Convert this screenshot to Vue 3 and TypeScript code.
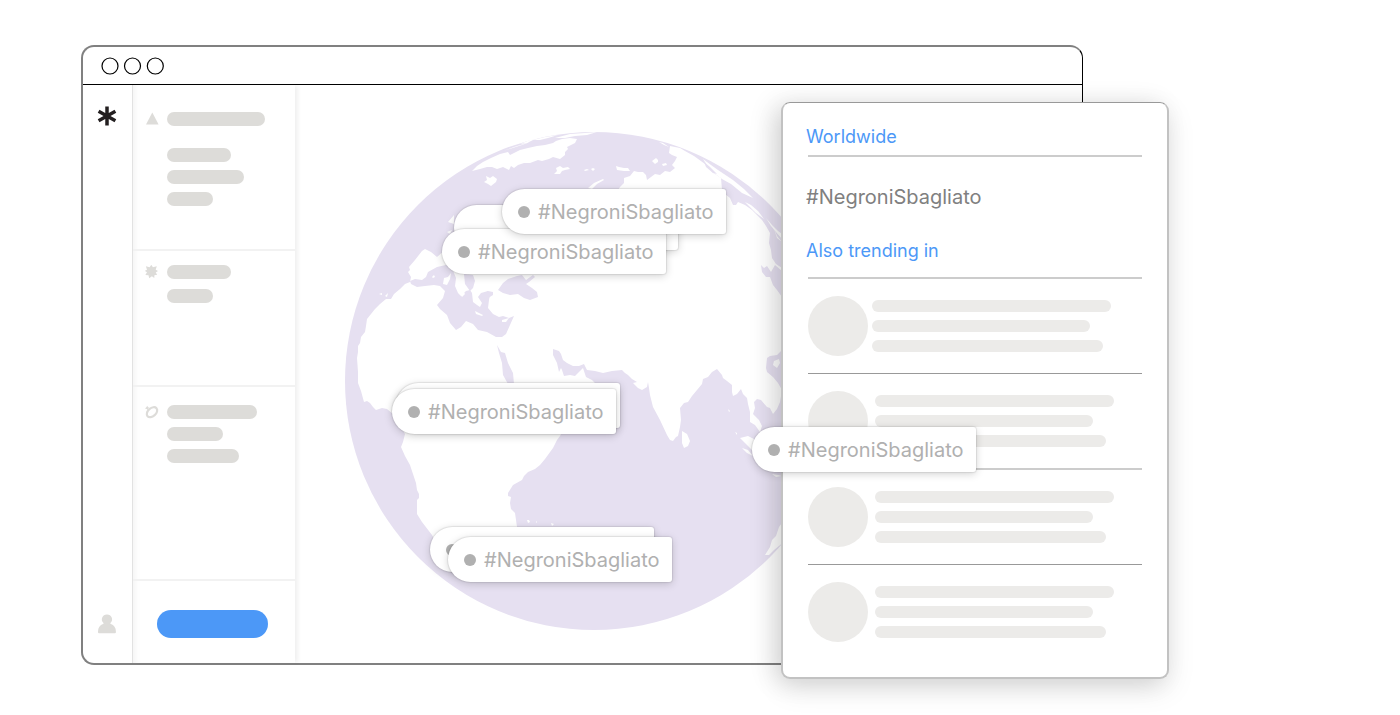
<script setup lang="ts">
interface Pin {
  x: number
  y: number
  dot: boolean
  label: string
}

interface Group {
  icon: 'triangle' | 'burst' | 'ring'
  bars: number[]
}

const tag = '#NegroniSbagliato'

const pins: Pin[] = [
  { x: 159, y: 120, dot: false, label: '' },
  { x: 147, y: 144, dot: true, label: tag },
  { x: 207, y: 104, dot: true, label: tag },
  { x: 101, y: 298, dot: false, label: '' },
  { x: 97, y: 304, dot: true, label: tag },
  { x: 135, y: 442, dot: true, label: '' },
  { x: 153, y: 452, dot: true, label: tag },
  { x: 457, y: 342, dot: true, label: tag },
]

const groups: Group[] = [
  { icon: 'triangle', bars: [98, 64, 77, 46] },
  { icon: 'burst', bars: [64, 46] },
  { icon: 'ring', bars: [90, 56, 72] },
]

const trends = [1, 2, 3, 4]
const lines = [239, 218, 231]
</script>

<template>
  <main class="page">
    <section class="window">
      <header class="titlebar">
        <svg width="64" height="18" viewBox="0 0 64 18" aria-hidden="true">
          <g fill="none" stroke="#000" stroke-width="1.2">
            <circle cx="9" cy="9" r="8" />
            <circle cx="31.5" cy="9" r="8" />
            <circle cx="54.3" cy="9" r="8" />
          </g>
        </svg>
      </header>
      <div class="body">
        <nav class="rail">
          <svg width="20" height="20" viewBox="0 0 20 20" aria-hidden="true">
            <path d="M10 .5V19.500M1.600 5.300L18.400 14.700M18.400 5.300L1.600 14.700" stroke="#231f20" stroke-width="3.500" />
          </svg>
          <svg width="20" height="20" viewBox="0 0 20 20" aria-hidden="true">
            <path
              d="M10 .4a5 5 0 0 1 3.400 8.700c-.3.5 0 .8.5 1 3 1 5 3.700 5 7.400v.8q0 1-1 1H2q-1 0-1-1v-.8c0-3.700 2-6.400 5-7.400.6-.2.8-.5.5-1A5 5 0 0 1 10 .4z"
              fill="#dddcd9"
            />
          </svg>
        </nav>
        <aside class="side">
          <div v-for="g in groups" :key="g.icon" class="group" :class="g.icon">
            <svg class="glyph" width="14" height="14" viewBox="0 0 14 14" aria-hidden="true">
              <path v-if="g.icon === 'triangle'" d="M7.300 .5L13.600 12.500H1z" fill="#dddcd9" />
              <path
                v-else-if="g.icon === 'burst'"
                d="M6.300 -.2L7.900 2.200 11.800 1.200 10.700 4.700 13 6 10.700 7.600 12.200 9.800 9.400 10.200 9.300 13 6.900 11.300 4.200 13.200 3.500 10.300 .4 10 2 7.300 -.2 5.900 2 4.700 .9 1.200 4.600 2.200z"
                fill="#dddcd9"
              />
              <g v-else>
                <ellipse cx="7" cy="7.200" rx="6" ry="4" transform="rotate(-42 7 7.200)" fill="none" stroke="#dddcd9" stroke-width="2.200" />
                <path d="M2.300 .8l.7 1.500 1.700.5-1.600.9-.4 1.500-1-1.300L0 3.500l1.300-1.200z" fill="#dddcd9" />
              </g>
            </svg>
            <div class="stack">
              <span v-for="(w, i) in g.bars" :key="i" class="bar" :style="{ width: w + 'px' }"></span>
            </div>
          </div>
          <div class="foot">
            <button class="cta" type="button" aria-label="Search"></button>
          </div>
        </aside>
        <div class="map">
          <svg class="globe" viewBox="345 132 498 498" aria-hidden="true">
            <circle cx="594" cy="381" r="249" fill="#e6e0f1" />
            <g fill="#fff">
              <!-- Africa, Europe and Asia -->
              <path
                d="M425 249L422 251 415 260 409 267 410 270 408 272 411 277 410 282 405 284 400 289 394 294 391 299 386 299 380 304 375 309 367 319 366 326 365 332 361 337 360 343 358 346 358 352 357 358 358 372 358 383 361 391 364 402 367 401 370 403 373 407 376 410 382 408 387 409 393 414 405 434 403 442 401 447 405 456 410 465 413 474 416 483 417 490 419 494 419 498 417 500 417 514 422 522 432 535 445 560 465 568 500 550 517 527 516 520 515 513 511 509 510 503 511 497 508 496 508 493 513 485 522 480 524 476 528 472 535 469 540 465 545 459 553 448 557 440 560 436 566 424 568 410 540 400 518 396 516 388 560 395 580 392 595 383 592 380 586 377 583 368 575 376 570 375 564 376 562 370 561 368 559 372 557 363 553 355 553 349 559 351 561 354 563 360 567 363 573 366 579 366 584 364 587 370 595 371 603 373 612 371 622 370 625 373 628 375 632 379 637 382 633 383 638 388 642 390 647 387 648 382 649 388 650 395 653 407 660 420 667 435 670 440 673 441 676 437 678 436 680 427 681 420 680 408 684 403 688 402 692 396 697 390 702 384 703 379 708 377 712 372 717 369 722 375 723 378 727 381 732 385 732 392 733 396 737 394 741 389 743 394 747 398 748 404 750 412 750 422 755 425 760 432 762 426 759 420 753 414 755 408 754 402 757 399 761 400 767 407 770 408 773 414 777 409 780 402 782 390 778 383 773 377 767 372 766 368 767 358 770 356 777 355 782 350 800 340 800 300 782 297 777 290 773 285 770 277 766 277 762 272 761 265 764 268 767 266 771 272 775 265 782 271 782 268 776 264 772 258 771 250 769 243 770 233 766 226 762 220 752 210 745 205 738 202 736 205 733 205 730 198 725 194 722 190 721 178 712 172 705 164 694 156 685 151 680 148 670 146 669 153 672 155 677 157 675 161 672 165 675 168 670 172 665 171 660 175 655 174 647 180 646 175 643 172 638 172 634 171 630 176 624 178 624 183 620 187 618 190 590 215 540 205 500 225 470 235 445 250 437 257 431 252z"
              />
              <!-- Greenland and the Canadian arctic -->
              <path d="M472 171L477 166 483 162 491 158 500 154 508 152 510 155 520 150 528 148 537 146 545 145 553 143 556 141 562 139 570 138 577 139 575 143 571 145 567 147 568 149 565 152 565 155 560 159 553 157 549 159 542 161 538 160 530 163 524 163 518 165 514 168 511 166 509 170 503 167 497 169 492 167 487 167 480 169z" />
              <path d="M503 151L514 147 530 142 522 145zM533 140L545 137 558 135 548 138 540 140zM555 138L570 134 585 133 597 132 587 135 575 136 565 138zM520 144l10-4 5-1-8 4z" />
              <!-- Iceland, Svalbard, British Isles and other islands -->
              <path d="M484 182L487 180 486 176 490 178 493 176 497 179 496 182 491 186 488 184z" />
              <path d="M554 174L557 171 556 168 560 166 563 168 568 167 570 169 565 170 562 171 560 174z" />
              <path d="M584 170l3-1 2 1-4 1zM591 169l2-1 2 1-2 2zM616 166l3 1 5 1 4 0 2 3-6 0-7-1zM652 161l4-3 2 2 0 2-3 2zM662 164l4-1 1 2-4 1zM659 142l4 1 6 4-5-2zM588 188l6-5 9-4 1 1-7 4-5 5z" />
              <path d="M448 222l6-7v9zM447 232l5-2-2 4zM379 294l3-1 0 2zM385 296l3-3-1 4z" />
              <!-- East Siberian coast and Kamchatka -->
              <path d="M703 159L711 165 718 170 733 180 744 189 753 198 742 193 731 184 722 179 711 171z" />
              <path d="M745 202L751 205 758 211 764 219 756 213zM766 218l6 7 6 6 4 3 0 5-6-7-5-6zM774 229l3 7 5 6-5-4z" />
              <!-- Sri Lanka and Indonesia -->
              <path d="M682 431L687 434 690 441 688 446 684 448 682 443z" />
              <path d="M740 438l8-2 6 3 5 10-4 4-7-7zM742 448l6 2 5 6-6-3zM728 409l2 2-1 1zM735 432l2 1 0 2zM772 474l6 1 4 1-6 1z" />
              <path d="M527 520l2 0 1 2-2 1zM551 523l3 1-2 2zM536 521l1 1-1 1z" />
              <!-- Australia -->
              <path d="M784 520L779 527 776 536 772 540 770 547 765 555 769 555 774 550 785 541z" />
            </g>
            <g fill="#e6e0f1">
              <!-- Mediterranean -->
              <path
                d="M410 281L415 279 422 280 426 277 428 272 437 267 446 265 452 268 456 278 455 286 458 293 461 296 466 291 470 290 472 293 473 302 477 305 480 307 482 303 478 297 481 293 488 291 490 295 489 300 488 308 493 314 499 317 503 316 509 318 514 316 510 325 506 334 502 337 496 337 487 332 478 330 473 324 466 321 461 327 456 330 450 323 447 315 440 309 437 305 443 298 445 291 440 286 434 285 425 286 417 287 411 284z"
              />
              <!-- Adriatic, Black Sea, Red Sea -->
              <path d="M464 274L473 275 475 281 473 288 470 291 465 284z" />
              <path d="M498 290L503 283 508 279 517 276 522 275 526 280 533 275 535 277 529 282 526 284 532 288 537 292 538 297 530 300 524 298 518 294 510 295 503 293z" />
              <path d="M497 345L501 352 505 353 508 363 513 373 514 384 508 384 503 375 502 363 499 353z" />
              <path d="M482 295l6-4 5 1 0 3-8 5z" />
              <!-- Bering Sea islets -->
              <path d="M704 162l6 5 7 7-4-1-7-6z" />
            </g>
            <g fill="#fff">
              <!-- Corsica, Italy and the Aegean islands -->
              <path d="M443 284l1-6 4-1 3-4-1 6-3 6zM432 277l2-2 1 2-2 1zM475 311l8 4-1 1-6-2zM502 320l7-2-3 4-4 0zM456 282l5 5 4 7-3 3-4-6z" />
              <path d="M774 361l5-2 1 4-3 5-4-3z" />
            </g>
          </svg>
          <ul class="pins">
            <li v-for="(p, i) in pins" :key="i" class="pin" :style="{ left: p.x + 'px', top: p.y + 'px' }">
              <span v-if="p.dot" class="dot"></span>{{ p.label }}
            </li>
          </ul>
        </div>
      </div>
    </section>

    <section class="panel">
      <h2 class="heading">Worldwide</h2>
      <hr class="rule first" />
      <p class="tag">{{ tag }}</p>
      <h2 class="heading">Also trending in</h2>
      <hr class="rule second" />
      <ul class="trends">
        <li v-for="t in trends" :key="t" class="trend">
          <span class="avatar"></span>
          <span class="lines">
            <span v-for="w in lines" :key="w" class="line" :style="{ width: w + 'px' }"></span>
          </span>
        </li>
      </ul>
    </section>
  </main>
</template>

<style>
body {
  margin: 0;
  background: #fff;
}
</style>

<style scoped>
.page {
  display: grid;
  grid-template-columns: minmax(700px, 1fr) 302px 86px;
  padding: 45px 231px 36px 81px;
  align-items: start;
  font-family: Inter, "Liberation Sans", Arial, sans-serif;
}

.window {
  grid-area: 1 / 1 / 2 / 3;
  border: 2px solid #808080;
  border-right: 1px solid #000;
  border-radius: 13px;
}

.titlebar {
  display: flex;
  height: 37px;
  align-items: center;
  padding-left: 18px;
  border-bottom: 1px solid #000;
}

.body {
  display: flex;
}

.rail {
  display: flex;
  flex-direction: column;
  align-items: center;
  justify-content: space-between;
  width: 49px;
  padding: 21px 2px 29px 0;
  box-sizing: border-box;
}

.side {
  width: 162px;
  border-left: 1px solid #e2e2e2;
  box-shadow: inset 6px 0 6px -4px rgba(0, 0, 0, 0.05), 4px 0 4px -1px rgba(0, 0, 0, 0.06);
}

.group {
  display: flex;
  gap: 8px;
  padding-left: 12px;
  border-bottom: 2px solid #f2f2f2;
}

.stack {
  display: flex;
  flex-direction: column;
  gap: 8px;
}

.bar {
  height: 14px;
  border-radius: 7px;
  background: #dddcd9;
}

.triangle {
  padding-top: 27px;
  padding-bottom: 43px;
}

.triangle .bar:first-child {
  margin-bottom: 14px;
}

.burst {
  padding-top: 14px;
  padding-bottom: 82px;
}

.burst .stack {
  gap: 10px;
}

.ring {
  padding-top: 18px;
  padding-bottom: 116px;
}

.foot {
  padding: 29px 0 25px 24px;
}

.cta {
  display: block;
  width: 111px;
  height: 28px;
  padding: 0;
  border: 0;
  border-radius: 14px;
  background: #4c98f7;
}

.map {
  position: relative;
  flex: 1;
}

.globe {
  display: block;
  width: 498px;
  height: 498px;
  margin: 47px 0 0 50px;
}

.pins {
  margin: 0;
  padding: 0;
  list-style: none;
}

.pin {
  position: absolute;
  z-index: 2;
  display: flex;
  align-items: center;
  gap: 8px;
  width: 224px;
  height: 45px;
  padding-left: 16px;
  box-sizing: border-box;
  border-radius: 23px 3px 3px 23px;
  background: #fff;
  box-shadow: 0 0 1px 1px rgba(0, 0, 0, 0.08), 0 2px 8px rgba(0, 0, 0, 0.18);
  color: #b0b0b0;
  font-size: 20px;
  white-space: nowrap;
}

.dot {
  width: 12px;
  height: 12px;
  border-radius: 50%;
  background: #b0b0b0;
}

.panel {
  position: relative;
  z-index: 1;
  grid-area: 1 / 2 / 2 / 4;
  margin-top: 57px;
  padding: 22px 25px 18px 23px;
  border: 2px solid #c2c2c2;
  border-top: 1px solid #999;
  border-radius: 9px;
  background: #fff;
  box-shadow: 0 10px 28px rgba(0, 0, 0, 0.1), -8px 2px 26px rgba(0, 0, 0, 0.12);
}

.heading {
  margin: 0;
  color: #4c98f7;
  font-size: 18px;
  font-weight: 400;
  line-height: 24px;
}

.tag {
  margin: 26px 0 28px;
  color: #808080;
  font-size: 20px;
  line-height: 28px;
}

.rule {
  height: 2px;
  margin: 0 0 0 2px;
  border: 0;
  background: #ccc;
}

.first {
  margin-top: 6px;
}

.second {
  margin-top: 14px;
}

.trends {
  margin: 0 0 0 2px;
  padding: 0;
  list-style: none;
}

.trend {
  display: flex;
  gap: 7px;
  padding: 17px 0;
  border-bottom: 1px solid #999;
}

.trend:first-child {
  gap: 4px;
}

.trend:nth-child(2) {
  border-bottom: 2px solid #ccc;
}

.trend:last-child {
  border-bottom: 0;
}

.avatar {
  width: 60px;
  height: 60px;
  border-radius: 50%;
  background: #ecebe9;
}

.lines {
  display: flex;
  flex-direction: column;
  gap: 8px;
  padding-top: 4px;
}

.line {
  height: 12px;
  border-radius: 6px;
  background: #ecebe9;
}
</style>
